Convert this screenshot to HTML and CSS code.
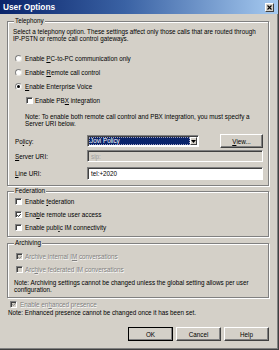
FILE: index.html
```html
<!DOCTYPE html>
<html>
<head>
<meta charset="utf-8">
<link rel="stylesheet" href="styles.css">
</head>
<body>
<div class="window">
  <div class="titlebar">
    <span class="title">User Options</span>
    <span class="close"><svg width="5" height="5" viewBox="0 0 5 5"><path d="M0.5 0.5L4.5 4.5M4.5 0.5L0.5 4.5" stroke="#000" stroke-width="1.1"/></svg></span>
  </div>
  <div class="body">
    <fieldset class="group tel">
      <legend>Telephony</legend>
      <p class="desc">Select a telephony option. These settings affect only those calls that are routed through<br>IP-PSTN or remote call control gateways.</p>
      <div class="radios">
        <div class="opt"><span class="radio"></span><span>Enable <u>P</u>C-to-PC communication only</span></div>
        <div class="opt"><span class="radio"></span><span>Enable <u>R</u>emote call control</span></div>
        <div class="opt"><span class="radio on"></span><span><u>E</u>nable Enterprise Voice</span></div>
        <div class="opt sub"><span class="check"></span><span>Enable PB<u>X</u> integration</span></div>
      </div>
      <p class="note">Note: To enable both remote call control and PBX integration, you must specify a<br>Server URI below.</p>
      <div class="field policy">
        <span class="lbl">Po<u>l</u>icy:</span>
        <div class="select"><span class="sel-text">Jovi Policy</span><span class="drop"><svg width="5" height="3" viewBox="0 0 5 3"><path d="M0 0H5L2.5 3Z" fill="#000"/></svg></span></div>
        <span class="btn view"><u>V</u>iew...</span>
      </div>
      <div class="field server">
        <span class="lbl"><u>S</u>erver URI:</span>
        <div class="input disabled">sip:</div>
      </div>
      <div class="field line">
        <span class="lbl"><u>L</u>ine URI:</span>
        <div class="input">tel:+2020</div>
      </div>
    </fieldset>

    <fieldset class="group fed">
      <legend>Federation</legend>
      <div class="opt"><span class="check"></span><span>Enable <u>f</u>ederation</span></div>
      <div class="opt"><span class="check on"><svg width="5" height="5" viewBox="0 0 5 5"><path d="M0.4 2.2L1.8 3.7L4.6 0.8" fill="none" stroke="#000" stroke-width="1.2"/></svg></span><span>Ena<u>b</u>le remote user access</span></div>
      <div class="opt"><span class="check"></span><span>Enable publ<u>i</u>c IM connectivity</span></div>
    </fieldset>

    <fieldset class="group arch">
      <legend>Archiving</legend>
      <div class="opt dis"><span class="check gray"><svg width="5" height="5" viewBox="0 0 5 5"><path d="M0.4 2.2L1.8 3.7L4.6 0.8" fill="none" stroke="#808080" stroke-width="1.2"/></svg></span><span>Archive internal I<u>M</u> conversations</span></div>
      <div class="opt dis"><span class="check gray"></span><span>Arc<u>h</u>ive federated IM conversations</span></div>
      <p class="note2">Note: Archiving settings cannot be changed unless the global setting allows per user<br>configuration.</p>
    </fieldset>

    <div class="opt dis enh"><span class="check gray"><svg width="5" height="5" viewBox="0 0 5 5"><path d="M0.4 2.2L1.8 3.7L4.6 0.8" fill="none" stroke="#808080" stroke-width="1.2"/></svg></span><span>Enable en<u>h</u>anced presence</span></div>
    <p class="note3">Note: Enhanced presence cannot be changed once it has been set.</p>

    <div class="buttons">
      <span class="btn default">OK</span>
      <span class="btn">Cancel</span>
      <span class="btn">Help</span>
    </div>
  </div>
</div>
</body>
</html>
```

FILE: styles.css
```css
* { box-sizing: border-box; }
html, body { margin: 0; padding: 0; }
body {
  width: 279px;
  height: 350px;
  overflow: hidden;
  background: #d4d0c8;
  font-family: "Liberation Sans", Arial, sans-serif;
  font-size: 6.3px;
  color: #000;
}
u { text-decoration-thickness: 0.6px; text-underline-offset: 1px; }
p { margin: 0; white-space: nowrap; }

.window {
  width: 279px;
  height: 350px;
  background: #d4d0c8;
  border-right: 1px solid #404040;
  border-bottom: 1px solid #404040;
  box-shadow: inset -1px -1px 0 #808080;
  display: flex;
  flex-direction: column;
}

.titlebar {
  height: 14px;
  flex: none;
  background: linear-gradient(to right, #0a246a 0%, #3a62a4 45%, #a6caf0 100%);
  display: flex;
  align-items: center;
  justify-content: space-between;
  padding: 0 4px 0 3px;
}
.title {
  color: #fff;
  font-weight: bold;
  font-size: 8.3px;
  font-family: "Liberation Sans", Arial, sans-serif;
}
.close {
  width: 9px;
  height: 9px;
  background: #d4d0c8;
  border: 1px solid;
  border-color: #fff #404040 #404040 #fff;
  display: flex;
  align-items: center;
  justify-content: center;
}

.body {
  flex: 1;
  display: flex;
  flex-direction: column;
  padding: 3px 9px 0 7px;
}

.group {
  margin: 0;
  padding: 0 5px 0 5px;
  min-width: 0;
  border: 1px solid #808080;
  box-shadow: inset 1px 1px 0 #fff, 1px 1px 0 #fff;
  display: flex;
  flex-direction: column;
}
.group legend {
  margin-left: 1px;
  padding: 0 1px;
  height: 8px;
  line-height: 8px;
  background: #d4d0c8;
}

.desc { margin-top: 3px; line-height: 7px; }

.radios { margin-top: 9px; display: flex; flex-direction: column; }
.opt {
  display: flex;
  align-items: center;
  gap: 3px;
  height: 14px;
  margin-left: 2px;
  white-space: nowrap;
}
.opt.sub { margin-left: 13px; gap: 2px; }

.radio {
  width: 7px;
  height: 7px;
  flex: none;
  border-radius: 50%;
  background: #fff;
  border: 1px solid;
  border-color: #808080 #e8e6e0 #e8e6e0 #808080;
  display: flex;
  align-items: center;
  justify-content: center;
}
.radio.on::after {
  content: "";
  width: 3px;
  height: 3px;
  border-radius: 50%;
  background: #000;
}

.check {
  width: 7px;
  height: 7px;
  flex: none;
  background: #fff;
  border: 1px solid;
  border-color: #808080 #fff #fff #808080;
  box-shadow: inset 1px 1px 0 #404040;
  display: flex;
  align-items: center;
  justify-content: center;
  padding-left: 1px;
  padding-top: 1px;
}
.check.gray { background: #d4d0c8; }

.note { margin: 6px 0 0 12px; line-height: 7px; }

.field { display: flex; align-items: center; margin-left: 2px; }
.field .lbl { width: 72px; flex: none; }
.policy { margin-top: 8px; height: 12px; }
.server { margin-top: 3px; height: 12px; }
.line { margin-top: 5px; height: 13px; margin-bottom: 5px; }

.select {
  width: 112px;
  height: 12px;
  border: 1px solid;
  border-color: #808080 #fff #fff #808080;
  box-shadow: inset 1px 1px 0 #404040;
  background: #fff;
  display: flex;
  padding: 1px;
}
.sel-text {
  flex: 1;
  background: #0a246a;
  color: #fff;
  line-height: 8px;
  padding-left: 1px;
  outline: 1px dotted #a0a0c0;
  outline-offset: -1px;
}
.drop {
  width: 7px;
  flex: none;
  background: #d4d0c8;
  border: 1px solid;
  border-color: #fff #404040 #404040 #fff;
  display: flex;
  align-items: center;
  justify-content: center;
}

.btn {
  display: flex;
  align-items: center;
  justify-content: center;
  background: #d4d0c8;
  border: 1px solid;
  border-color: #fff #404040 #404040 #fff;
  box-shadow: inset -1px -1px 0 #808080;
}
.view { width: 43px; height: 14px; margin-left: 21px; }

.input {
  width: 177px;
  height: 100%;
  border: 1px solid;
  border-color: #808080 #fff #fff #808080;
  box-shadow: inset 1px 1px 0 #404040;
  background: #fff;
  padding-left: 3px;
  display: flex;
  align-items: center;
}
.input.disabled {
  background: #d4d0c8;
  color: #a0a0a0;
}

.fed { margin-top: 1px; padding-bottom: 2px; }
.fed .opt { height: 13px; }

.arch { margin-top: 2px; padding-top: 3px; padding-bottom: 4px; }
.arch .opt { height: 13px; margin-left: 3px; gap: 2px; }
.dis { color: #808080; text-shadow: 0.6px 0.6px 0 #fff; }
.note2 { margin: 3px 0 0 1px; line-height: 7px; }

.enh { margin: 1px 0 0 3px; height: 10px; gap: 3px; }
.note3 { margin-left: 1px; line-height: 7px; }

.buttons {
  margin-top: 11px;
  display: flex;
  justify-content: flex-end;
  gap: 3px;
}
.buttons .btn { width: 45px; height: 14px; }
.btn.default {
  outline: 1px solid #000;
  outline-offset: -1px;
  border-color: #fff #404040 #404040 #fff;
}
```
